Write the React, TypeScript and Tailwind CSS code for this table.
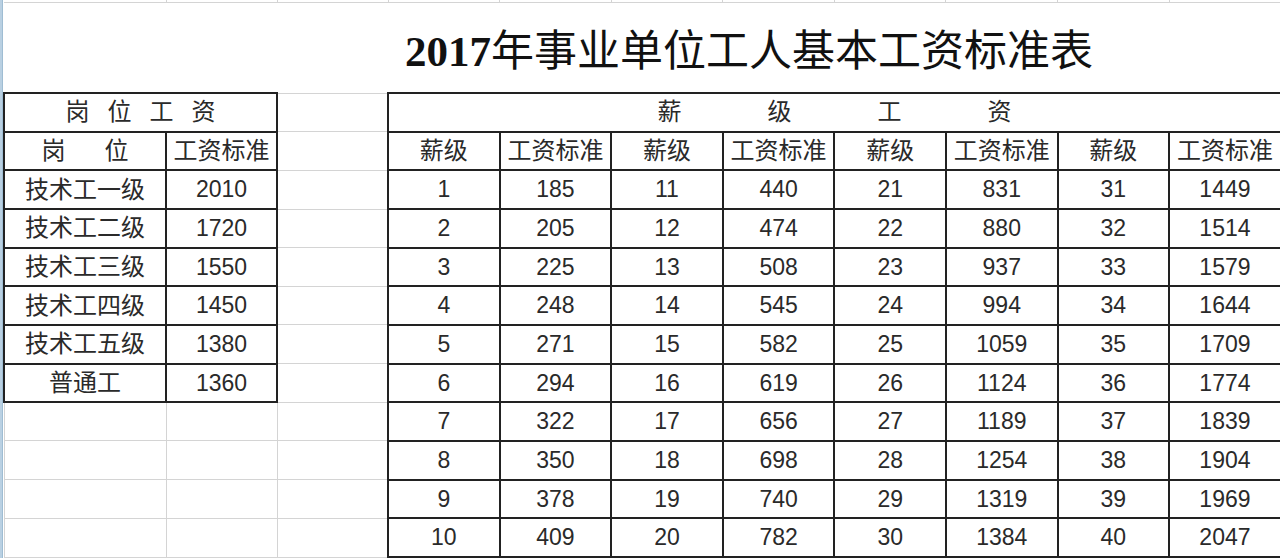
const posts = [
  { name: '技术工一级', pay: 2010 },
  { name: '技术工二级', pay: 1720 },
  { name: '技术工三级', pay: 1550 },
  { name: '技术工四级', pay: 1450 },
  { name: '技术工五级', pay: 1380 },
  { name: '普通工', pay: 1360 },
];

// 薪级 1-40
const levelPay = [
  185, 205, 225, 248, 271, 294, 322, 350, 378, 409,
  440, 474, 508, 545, 582, 619, 656, 698, 740, 782,
  831, 880, 937, 994, 1059, 1124, 1189, 1254, 1319, 1384,
  1449, 1514, 1579, 1644, 1709, 1774, 1839, 1904, 1969, 2047,
];

const colWidths = [162, 111, 111, 111.6, 111.6, 111.6, 111.6, 111.6, 111.6, 111.6, 111.6];

const ink = 'border-2 border-[#222] text-center align-middle p-0';
const grid = 'border border-[#d4d4d4] p-0';
const num = 'text-[23px]';

const App = () => {
  return (
    <div className="flex w-[1280px] h-[558px] overflow-hidden bg-white text-[#2a2a2a] font-['Liberation_Sans','Noto_Sans_CJK_SC',sans-serif]">
      {/* sheet edge */}
      <div className="w-[3px] shrink-0 bg-[#b9d0e2] border-r border-[#9fbdd3]" />

      <table className="table-fixed border-collapse w-[1277px] shrink-0">
        <colgroup>
          {colWidths.map((w, i) => (
            <col key={i} style={{ width: w }} />
          ))}
        </colgroup>
        <tbody>
          {/* leftover of the row above */}
          <tr className="h-[2px]">
            {colWidths.map((_, i) => (
              <td key={i} className="p-0 border-r border-[#d4d4d4]" />
            ))}
          </tr>

          {/* title */}
          <tr className="h-[91px]">
            <td colSpan={11} className="p-0 border-t border-[#d4d4d4] align-middle">
              <div className="pl-[401px] pt-[8px] text-[43px] leading-none text-[#111] whitespace-nowrap font-['Liberation_Serif','Noto_Sans_CJK_SC',serif]">
                <span className="font-bold">2017</span>
                <span className="font-normal">年事业单位工人基本工资标准表</span>
              </div>
            </td>
          </tr>

          {/* group headers */}
          <tr className="h-[38.6px] text-[24px]">
            <td colSpan={2} className={ink}>
              <div className="flex justify-center gap-[18px]">
                <span>岗</span>
                <span>位</span>
                <span>工</span>
                <span>资</span>
              </div>
            </td>
            <td className={grid} />
            <td colSpan={8} className={ink}>
              <div className="flex justify-center gap-[86px]">
                <span>薪</span>
                <span>级</span>
                <span>工</span>
                <span>资</span>
              </div>
            </td>
          </tr>

          {/* column headers */}
          <tr className="h-[38.6px] text-[24px]">
            <td className={ink}>
              <div className="flex justify-center gap-[39px]">
                <span>岗</span>
                <span>位</span>
              </div>
            </td>
            <td className={ink}>工资标准</td>
            <td className={grid} />
            {[0, 1, 2, 3].map((g) => (
              <>
                <td key={`a${g}`} className={ink}>薪级</td>
                <td key={`b${g}`} className={ink}>工资标准</td>
              </>
            ))}
          </tr>

          {/* data rows */}
          {Array.from({ length: 10 }).map((_, i) => {
            const post = posts[i];
            return (
              <tr key={i} className="h-[38.6px] text-[24px]">
                {post ? (
                  <>
                    <td className={ink}>{post.name}</td>
                    <td className={`${ink} ${num}`}>{post.pay}</td>
                  </>
                ) : (
                  <>
                    <td className={grid} />
                    <td className={grid} />
                  </>
                )}
                <td className={grid} />
                {[0, 1, 2, 3].map((g) => {
                  const level = g * 10 + i + 1;
                  return (
                    <>
                      <td key={`l${g}`} className={`${ink} ${num}`}>{level}</td>
                      <td key={`p${g}`} className={`${ink} ${num}`}>{levelPay[level - 1]}</td>
                    </>
                  );
                })}
              </tr>
            );
          })}
        </tbody>
      </table>
    </div>
  );
};

export default App;
